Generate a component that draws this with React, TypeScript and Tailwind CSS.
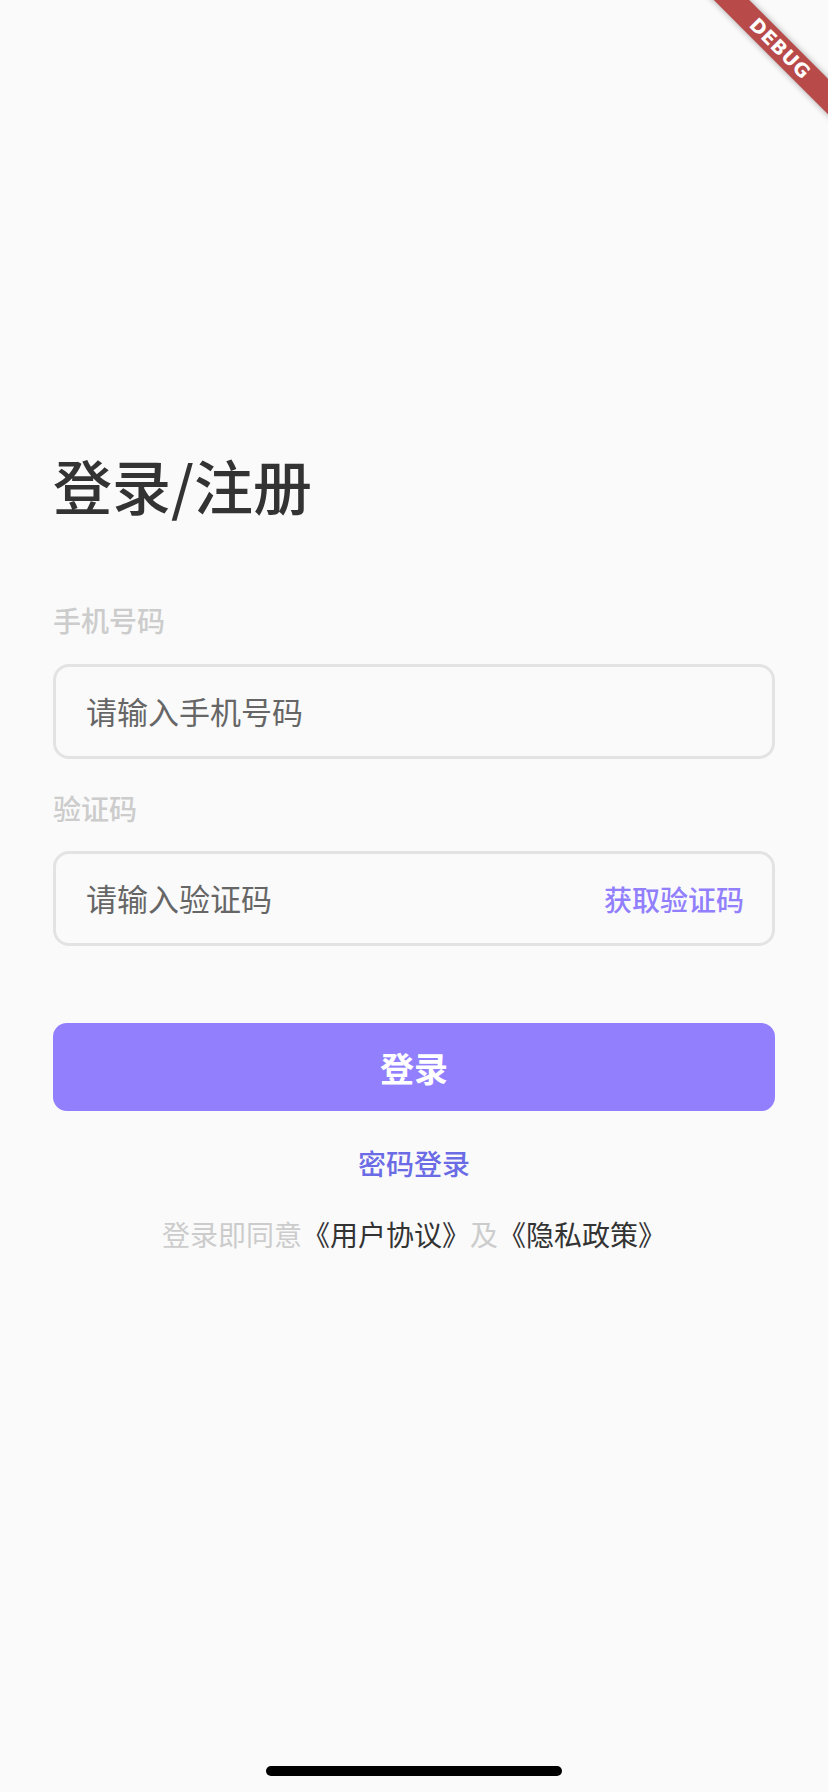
import { useState } from "react";

const Open = () => <span className="inline-flex w-[1em] justify-end">《</span>;
const Close = () => <span className="inline-flex w-[1em] justify-start">》</span>;

const LoginPage = () => {
  const [phone, setPhone] = useState("");
  const [code, setCode] = useState("");

  return (
    <div
      className="relative h-[1792px] w-full overflow-hidden bg-[#fafafa]"
      style={{ fontFamily: '"Noto Sans CJK SC", "Noto Sans", sans-serif' }}
    >
      <div className="flex flex-col px-[53px] pt-[455px]">
        <h1 className="text-[59px] leading-[59px] font-medium text-[#333333]">登录/注册</h1>

        <div className="mt-[92px] text-[28px] leading-[28px] font-medium text-[#cccccc]">手机号码</div>
        <div className="mt-[30px] flex h-[95px] items-center rounded-[16px] border-[3px] border-[#e3e3e3] px-[30px]">
          <input
            value={phone}
            onChange={(e) => setPhone(e.target.value)}
            placeholder="请输入手机号码"
            className="w-full bg-transparent text-[31px] text-[#333] outline-none placeholder:text-[#666666]"
          />
        </div>

        <div className="mt-[35px] text-[28px] leading-[28px] font-medium text-[#cccccc]">验证码</div>
        <div className="mt-[29px] flex h-[95px] items-center rounded-[16px] border-[3px] border-[#e3e3e3] pl-[30px] pr-[28px]">
          <input
            value={code}
            onChange={(e) => setCode(e.target.value)}
            placeholder="请输入验证码"
            className="min-w-0 flex-1 bg-transparent text-[31px] text-[#333] outline-none placeholder:text-[#666666]"
          />
          <button className="text-[28px] font-medium text-[#917ffe]">获取验证码</button>
        </div>

        <button className="mt-[77px] flex h-[88px] items-center justify-center rounded-[14px] bg-[#917ffe] text-[34px] font-bold text-white">
          登录
        </button>

        <button className="mt-[38px] self-center text-[28px] leading-[28px] font-medium text-[#6b6be6]">密码登录</button>

        <p className="mt-[43px] text-center text-[28px] leading-[28px] text-[#cccccc]">
          登录即同意
          <span className="text-[#333333]">
            <Open />用户协议<Close />
          </span>
          及
          <span className="text-[#333333]">
            <Open />隐私政策<Close />
          </span>
        </p>
      </div>

      {/* debug banner */}
      <div className="absolute left-[680px] top-[36px] flex h-[25px] w-[200px] rotate-45 items-center justify-center bg-[#b94a4a] shadow-[0_0_6px_rgba(0,0,0,0.35)]">
        <span
          className="text-[19px] leading-none font-bold tracking-[0.5px] text-white"
          style={{ fontFamily: '"DejaVu Sans", sans-serif' }}
        >
          DEBUG
        </span>
      </div>

      {/* home indicator */}
      <div className="absolute bottom-[16px] left-1/2 h-[10px] w-[296px] -translate-x-1/2 rounded-full bg-black" />
    </div>
  );
};

export default LoginPage;
